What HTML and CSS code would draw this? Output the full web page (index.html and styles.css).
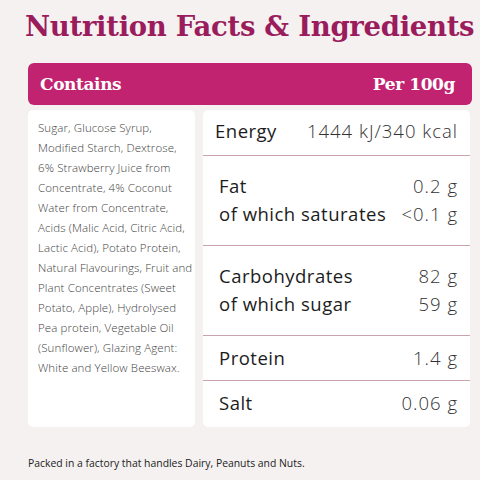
FILE: index.html
```html
<!DOCTYPE html>
<html lang="en">
<head>
    <meta charset="UTF-8">
    <title>Nutrition Facts &amp; Ingredients</title>
    <link rel="stylesheet" href="styles.css">
</head>
<body>
    <div class="page">
        <h1 class="title">Nutrition Facts &amp; Ingredients</h1>

        <div class="header-bar">
            <span>Contains</span>
            <span>Per 100g</span>
        </div>

        <div class="cards">
            <div class="card ingredients">
                Sugar, Glucose Syrup,<br>
                Modified Starch, Dextrose,<br>
                6% Strawberry Juice from<br>
                Concentrate, 4% Coconut<br>
                Water from Concentrate,<br>
                Acids (Malic Acid, Citric Acid,<br>
                Lactic Acid), Potato Protein,<br>
                Natural Flavourings, Fruit and<br>
                Plant Concentrates (Sweet<br>
                Potato, Apple), Hydrolysed<br>
                Pea protein, Vegetable Oil<br>
                (Sunflower), Glazing Agent:<br>
                White and Yellow Beeswax.
            </div>

            <div class="card nutrition">
                <div class="group energy">
                    <div class="row"><span class="label">Energy</span><span class="value">1444 kJ/340 kcal</span></div>
                </div>
                <div class="group double">
                    <div class="row"><span class="label">Fat</span><span class="value">0.2 g</span></div>
                    <div class="row"><span class="label">of which saturates</span><span class="value">&lt;0.1 g</span></div>
                </div>
                <div class="group double">
                    <div class="row"><span class="label">Carbohydrates</span><span class="value">82 g</span></div>
                    <div class="row"><span class="label">of which sugar</span><span class="value">59 g</span></div>
                </div>
                <div class="group">
                    <div class="row"><span class="label">Protein</span><span class="value">1.4 g</span></div>
                </div>
                <div class="group last">
                    <div class="row"><span class="label">Salt</span><span class="value">0.06 g</span></div>
                </div>
            </div>
        </div>

        <p class="note">Packed in a factory that handles Dairy, Peanuts and Nuts.</p>
    </div>
</body>
</html>
```

FILE: styles.css
```css
/* Tarjeta de información nutricional */
body { margin: 0; background-color: #f4f1f0; font-family: 'Open Sans', Lato, sans-serif; color: #222; }
.page { width: 480px; height: 480px; box-sizing: border-box; padding: 0 8px 0 28px; overflow: hidden; }

.title { margin: 0 0 0 -3px; padding-top: 10px; height: 63px; box-sizing: border-box; font-family: 'DejaVu Serif', serif; font-weight: 900; font-size: 27.5px; letter-spacing: -0.3px; color: #9b1c5d; white-space: nowrap; }

.header-bar { display: flex; justify-content: space-between; align-items: center; height: 42px; box-sizing: border-box; padding: 0 17px 0 12px; background-color: #c12370; border-radius: 6px; color: #fff; font-family: 'DejaVu Serif', serif; font-weight: bold; font-size: 17px; letter-spacing: -0.4px; }

.cards { display: grid; grid-template-columns: 167px 267px; gap: 8px; margin-top: 5px; height: 317px; }
.card { background-color: #fff; border-radius: 5px; }

.ingredients { padding: 8px 0 0 10px; font-size: 11.5px; font-weight: 300; line-height: 20px; color: #444; white-space: nowrap; letter-spacing: 0.1px; }

.nutrition { display: flex; flex-direction: column; }
.group { padding: 8px 13px 8px 16px; border-bottom: 1px solid #c9a3ae; }
.group.energy { padding: 7px 13px 10px 12px; }
.group.double { padding: 16px 13px 17px 16px; }
.group.last { border-bottom: none; }
.row { display: flex; justify-content: space-between; height: 28px; line-height: 28px; font-size: 18.5px; color: #1c1c1c; }
.label { letter-spacing: 0.5px; }
.value { font-weight: 300; color: #333; letter-spacing: 1px; margin-right: -1px; }

.note { margin: 29px 0 0; font-size: 10.4px; color: #222; }
```
